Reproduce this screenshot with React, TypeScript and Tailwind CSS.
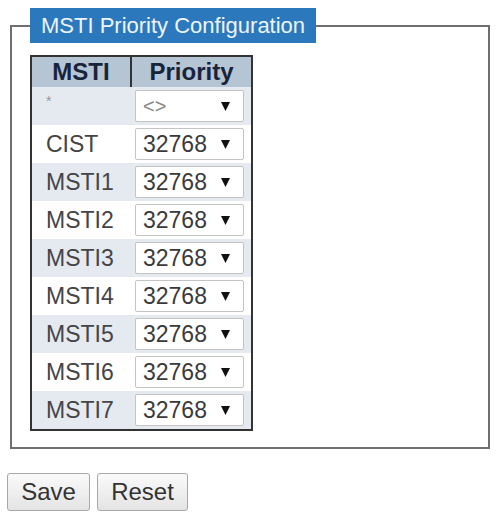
import React from "react";

const rows = [
  { name: "*", value: "<>", odd: true },
  { name: "CIST", value: "32768", odd: false },
  { name: "MSTI1", value: "32768", odd: true },
  { name: "MSTI2", value: "32768", odd: false },
  { name: "MSTI3", value: "32768", odd: true },
  { name: "MSTI4", value: "32768", odd: false },
  { name: "MSTI5", value: "32768", odd: true },
  { name: "MSTI6", value: "32768", odd: false },
  { name: "MSTI7", value: "32768", odd: true },
];

function Arrow() {
  return (
    <svg width="9" height="10" viewBox="0 0 9 10" className="shrink-0">
      <polygon points="0,1 9,1 4.5,10" fill="#111" />
    </svg>
  );
}

export default function App() {
  return (
    <div
      className="bg-white w-[496px] h-[518px] pl-[7px] pt-[8px]"
      style={{ fontFamily: '"Liberation Sans", Arial, sans-serif' }}
    >
      <fieldset className="ml-[3px] w-[480px] border-2 border-[#6f6f6f] px-[18px] pb-[16px]">
        <legend className="bg-[#2b79bc] text-[#eef5ff] text-[22px] leading-[35px] h-[35px] px-[11px]">
          MSTI Priority Configuration
        </legend>
        <table className="mt-[12px] border-2 border-[#333] border-collapse w-[223px] text-[23px]">
          <thead>
            <tr className="bg-[#b6c5d4] h-[31px]">
              <th className="w-[100px] font-bold text-[#17243a] text-[24px] leading-none text-center border-r-2 border-[#333]">
                MSTI
              </th>
              <th className="font-bold text-[#17243a] text-[24px] leading-none text-center">Priority</th>
            </tr>
          </thead>
          <tbody>
            {rows.map((r) => (
              <tr key={r.name} className={r.odd ? "bg-[#e4eaf0] h-[38px]" : "bg-white h-[38px]"}>
                <td className="pl-[14px] text-[#454545] leading-none align-middle">
                  {r.name === "*" ? (
                    <span className="text-[#999] text-[14px] relative -top-[8px]">*</span>
                  ) : (
                    r.name
                  )}
                </td>
                <td className="pl-[4px] pr-[7px] py-[3px] align-middle">
                  <div className="h-[32px] w-[109px] bg-white border border-[#c4c4c4] rounded-[2px] flex items-center justify-between pl-[7px] pr-[13px]">
                    <span className={r.value === "<>" ? "text-[#888] text-[20px] leading-none" : "text-[#3a3a3a] leading-none"}>
                      {r.value}
                    </span>
                    <Arrow />
                  </div>
                </td>
              </tr>
            ))}
          </tbody>
        </table>
      </fieldset>
      <div className="flex gap-[7px] mt-[24px]">
        <button className="h-[38px] w-[83px] border border-[#a8a8a8] rounded-[3px] bg-gradient-to-b from-[#fafafa] to-[#e4e4e4] text-[24px] text-[#333]">
          Save
        </button>
        <button className="h-[38px] w-[91px] border border-[#a8a8a8] rounded-[3px] bg-gradient-to-b from-[#fafafa] to-[#e4e4e4] text-[24px] text-[#333]">
          Reset
        </button>
      </div>
    </div>
  );
}
